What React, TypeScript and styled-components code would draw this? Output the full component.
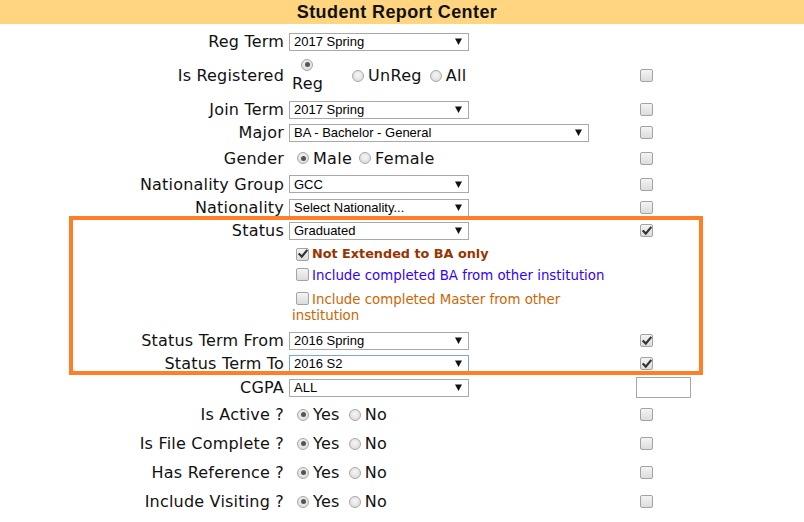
import React from "react";
import styled, { createGlobalStyle } from "styled-components";

const Global = createGlobalStyle`
  html, body { margin: 0; padding: 0; background: #fff; }
  body { font-family: "DejaVu Sans", Verdana, sans-serif; color: #111; }
`;

const Page = styled.div`
  position: relative;
  width: 804px;
  height: 522px;
  overflow: hidden;
`;

const TitleBar = styled.div`
  height: 24px;
  background: #ffd580;
  display: flex;
  align-items: center;
  justify-content: center;
  font-family: "Liberation Sans", Arial, sans-serif;
  font-weight: bold;
  font-size: 18px;
  letter-spacing: 0.4px;
  color: #111;
  padding-right: 10px;
  box-sizing: border-box;
`;

const Form = styled.div`
  padding-top: 6px;
  display: flex;
  flex-direction: column;
`;

const Row = styled.div<{ $h: number }>`
  display: grid;
  grid-template-columns: 289px 347px 1fr;
  height: ${(p) => p.$h}px;
  align-items: center;
`;

const Label = styled.div`
  text-align: right;
  padding-right: 5px;
  font-size: 16px;
  letter-spacing: 0.2px;
  white-space: nowrap;
  color: #111;
`;

const Cell = styled.div`
  display: flex;
  align-items: center;
  height: 100%;
`;

const CheckCell = styled.div`
  display: flex;
  align-items: center;
  padding-left: 4px;
`;

const SelectBox = styled.div<{ $w: number; $focus?: boolean }>`
  box-sizing: border-box;
  width: ${(p) => p.$w}px;
  height: 18px;
  border: 1px solid ${(p) => (p.$focus ? "#7aa7d8" : "#a9a9a9")};
  background: #fff;
  display: flex;
  align-items: center;
  justify-content: space-between;
  padding: 0 6px 0 4px;
  font-family: "Liberation Sans", Arial, sans-serif;
  font-size: 13px;
  color: #000;
`;

const Arrow = () => (
  <svg width="7" height="7" viewBox="0 0 7 7">
    <polygon points="0,0.5 7,0.5 3.5,7" fill="#111" />
  </svg>
);

const BoxSpan = styled.span<{ $inline?: boolean }>`
  box-sizing: border-box;
  display: inline-flex;
  align-items: center;
  justify-content: center;
  width: 13px;
  height: 13px;
  border: 1px solid #a3a3a3;
  border-radius: 2px;
  background: linear-gradient(#f4f4f4, #dcdcdc);
  vertical-align: ${(p) => (p.$inline ? "-1px" : "middle")};
  margin: ${(p) => (p.$inline ? "0 3px 0 4px" : "0")};
`;

const Checkbox = ({ checked, inline }: { checked?: boolean; inline?: boolean }) => (
  <BoxSpan $inline={inline}>
    {checked && (
      <svg width="10" height="10" viewBox="0 0 10 10">
        <path d="M1.5 5.2 L3.8 7.6 L8.6 1.8" stroke="#333" strokeWidth="2.2" fill="none" strokeLinecap="square" />
      </svg>
    )}
  </BoxSpan>
);

const RadioCircle = styled.span`
  box-sizing: border-box;
  width: 12px;
  height: 12px;
  border-radius: 50%;
  border: 1px solid #a8a8a8;
  background: radial-gradient(circle at 50% 40%, #f6f6f6, #d6d6d6);
  display: inline-flex;
  align-items: center;
  justify-content: center;
  flex: none;
`;

const Dot = styled.span`
  width: 5px;
  height: 5px;
  border-radius: 50%;
  background: #555;
`;

const Radio = ({ checked }: { checked?: boolean }) => (
  <RadioCircle>{checked && <Dot />}</RadioCircle>
);

const RadioGroup = styled.div<{ $gap?: number }>`
  display: flex;
  align-items: center;
  gap: ${(p) => p.$gap ?? 9}px;
  padding-left: 8px;
  font-size: 16px;
  letter-spacing: 0.3px;
`;

const RadioItem = styled.span`
  display: inline-flex;
  align-items: center;
  gap: 4px;
`;

const StackItem = styled.span`
  display: inline-flex;
  flex-direction: column;
  align-items: flex-start;
  width: 52px;
  margin-left: -5px;
  line-height: 18px;
`;

const StackRadio = styled.span`
  display: flex;
  padding-left: 9px;
  margin-bottom: 4px;
`;

const Block = styled.div`
  grid-column: 2 / 3;
  width: 330px;
  padding-top: 1px;
  padding-left: 3px;
  align-self: start;
`;

const CheckLine = styled.div<{ $color: string; $bold?: boolean; $mt?: number }>`
  line-height: 16px;
  padding: 3px 0;
  margin-top: ${(p) => p.$mt ?? 0}px;
  font-size: ${(p) => (p.$bold ? "12.8px" : "13.33px")};
  color: ${(p) => p.$color};
  font-weight: ${(p) => (p.$bold ? "bold" : "normal")};
`;

const TextInput = styled.div`
  box-sizing: border-box;
  width: 55px;
  height: 21px;
  border: 1px solid #a6a6a6;
  background: #fff;
`;

const Highlight = styled.div`
  position: absolute;
  left: 69px;
  top: 216px;
  width: 634px;
  height: 159px;
  box-sizing: border-box;
  border: 4px solid #ff7f27;
  pointer-events: none;
`;

type SelectRowProps = {
  label: string;
  value: string;
  w?: number;
  focus?: boolean;
  check?: boolean;
  h?: number;
};

const SelectRow = ({ label, value, w = 180, focus, check, h = 23 }: SelectRowProps) => (
  <Row $h={h}>
    <Label>{label}</Label>
    <Cell>
      <SelectBox $w={w} $focus={focus}>
        <span>{value}</span>
        <Arrow />
      </SelectBox>
    </Cell>
    <CheckCell>{check !== undefined && <Checkbox checked={check} />}</CheckCell>
  </Row>
);

const RadioRow = ({
  label,
  options,
  h = 29,
  gap,
}: {
  label: string;
  options: string[];
  h?: number;
  gap?: number;
}) => (
  <Row $h={h}>
    <Label>{label}</Label>
    <RadioGroup $gap={gap}>
      {options.map((o, i) => (
        <RadioItem key={o}>
          <Radio checked={i === 0} />
          {o}
        </RadioItem>
      ))}
    </RadioGroup>
    <CheckCell>
      <Checkbox />
    </CheckCell>
  </Row>
);

export default function App() {
  return (
    <Page>
      <Global />
      <TitleBar>Student Report Center</TitleBar>
      <Form>
        <SelectRow label="Reg Term" value="2017 Spring" />
        <Row $h={45}>
          <Label>Is Registered</Label>
          <RadioGroup $gap={8}>
            <StackItem>
              <StackRadio>
                <Radio checked />
              </StackRadio>
              Reg
            </StackItem>
            <RadioItem>
              <Radio />
              UnReg
            </RadioItem>
            <RadioItem>
              <Radio />
              All
            </RadioItem>
          </RadioGroup>
          <CheckCell>
            <Checkbox />
          </CheckCell>
        </Row>
        <SelectRow label="Join Term" value="2017 Spring" check={false} />
        <SelectRow label="Major" value="BA - Bachelor - General" w={300} check={false} />
        <RadioRow label="Gender" options={["Male", "Female"]} h={28} gap={7} />
        <SelectRow label="Nationality Group" value="GCC" check={false} h={24} />
        <SelectRow label="Nationality" value="Select Nationality..." check={false} />
        <SelectRow label="Status" value="Graduated" check={true} />
        <Row $h={87}>
          <Block>
            <CheckLine $color="#993300" $bold>
              <Checkbox checked inline />
              Not Extended to BA only
            </CheckLine>
            <CheckLine $color="#3300ff">
              <Checkbox inline />
              Include completed BA from other institution
            </CheckLine>
            <CheckLine $color="#cc6600" $mt={2}>
              <Checkbox inline />
              Include completed Master from other institution
            </CheckLine>
          </Block>
        </Row>
        <SelectRow label="Status Term From" value="2016 Spring" check={true} />
        <SelectRow label="Status Term To" value="2016 S2" focus check={true} />
        <Row $h={25}>
          <Label>CGPA</Label>
          <Cell>
            <SelectBox $w={180}>
              <span>ALL</span>
              <Arrow />
            </SelectBox>
          </Cell>
          <TextInput />
        </Row>
        <RadioRow label="Is Active ?" options={["Yes", "No"]} />
        <RadioRow label="Is File Complete ?" options={["Yes", "No"]} />
        <RadioRow label="Has Reference ?" options={["Yes", "No"]} />
        <RadioRow label="Include Visiting ?" options={["Yes", "No"]} />
      </Form>
      <Highlight />
    </Page>
  );
}
